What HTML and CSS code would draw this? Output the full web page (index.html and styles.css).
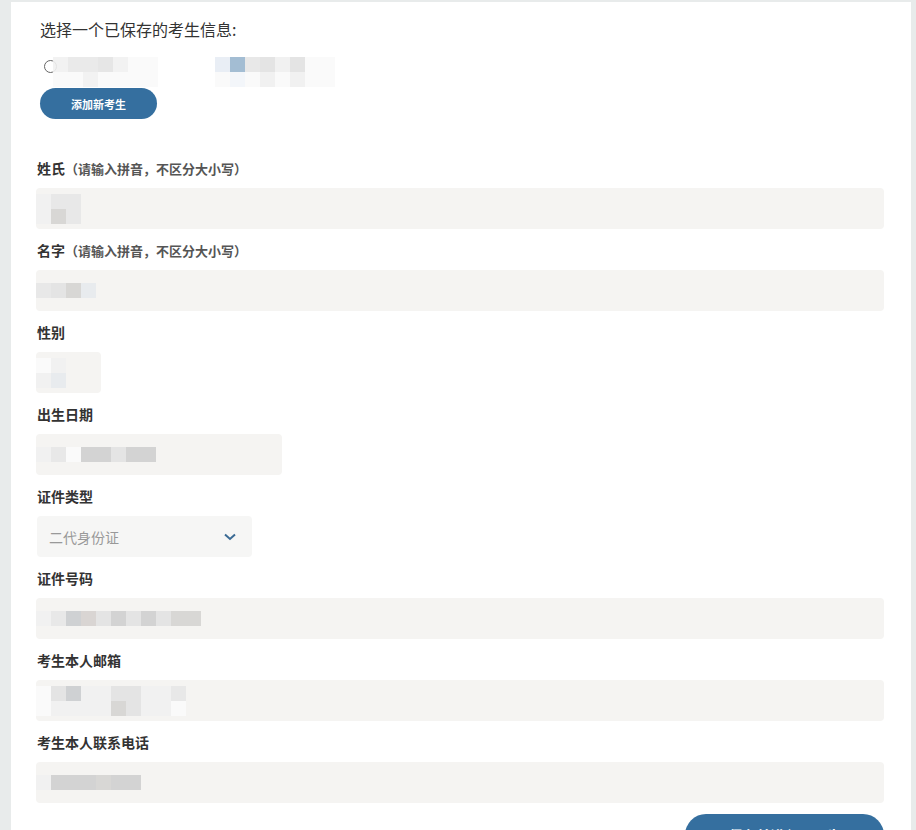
FILE: index.html
```html
<!DOCTYPE html>
<html lang="zh">
<head>
<meta charset="utf-8">
<title>考生信息</title>
<link rel="stylesheet" href="styles.css">
</head>
<body>
<div class="panel">
  <div class="saved">
    <div class="saved-title">选择一个已保存的考生信息:</div>
    <div class="saved-row">
      <span class="radio"></span>
      <span class="blur blur-a">
        <i class="c1"></i><i class="c2"></i><i class="c2"></i><i class="c3"></i><i class="c1"></i><i class="c0"></i><i class="c0"></i>
        <i class="c0"></i><i class="c0"></i><i class="c1"></i><i class="c0"></i><i class="c0"></i><i class="c0"></i><i class="c0"></i>
      </span>
      <span class="blur blur-b">
        <i class="cb1"></i><i class="cb2"></i><i class="c2"></i><i class="c3"></i><i class="c1"></i><i class="c3"></i><i class="c0"></i><i class="c0"></i>
        <i class="c0"></i><i class="cb0"></i><i class="c0"></i><i class="c1"></i><i class="c0"></i><i class="c1"></i><i class="c0"></i><i class="c0"></i>
      </span>
    </div>
    <button class="btn-add">添加新考生</button>
  </div>

  <div class="field">
    <div class="label">姓氏<span class="hint">（请输入拼音，不区分大小写）</span></div>
    <div class="input"><span class="blur cols3"><i class="c1"></i><i class="c2"></i><i class="c2"></i><i class="c1"></i><i class="c4"></i><i class="c2"></i></span></div>
  </div>
  <div class="field">
    <div class="label">名字<span class="hint">（请输入拼音，不区分大小写）</span></div>
    <div class="input"><span class="blur cols4"><i class="c2"></i><i class="c3"></i><i class="c4"></i><i class="cb3"></i></span></div>
  </div>
  <div class="field">
    <div class="label">性别</div>
    <div class="input small"><span class="blur cols2"><i class="c0"></i><i class="c1"></i><i class="c1"></i><i class="cb3"></i></span></div>
  </div>
  <div class="field">
    <div class="label">出生日期</div>
    <div class="input date"><span class="blur cols8"><i class="c1"></i><i class="c2"></i><i class="c0"></i><i class="c5"></i><i class="c5"></i><i class="c3"></i><i class="c5"></i><i class="c5"></i></span></div>
  </div>
  <div class="field">
    <div class="label">证件类型</div>
    <div class="input select">
      <span class="select-text">二代身份证</span>
      <svg class="chev" width="12" height="8" viewBox="0 0 12 8"><path d="M1 1.5 L6 6 L11 1.5" fill="none" stroke="#3a6a94" stroke-width="2"/></svg>
    </div>
  </div>
  <div class="field">
    <div class="label">证件号码</div>
    <div class="input"><span class="blur cols11"><i class="c1"></i><i class="c2"></i><i class="c6"></i><i class="c7"></i><i class="c3"></i><i class="c5"></i><i class="c3"></i><i class="c5"></i><i class="c3"></i><i class="c4"></i><i class="c4"></i></span></div>
  </div>
  <div class="field">
    <div class="label">考生本人邮箱</div>
    <div class="input"><span class="blur cols10"><i class="c0"></i><i class="c3"></i><i class="c6"></i><i class="c1"></i><i class="c1"></i><i class="c3"></i><i class="c3"></i><i class="c1"></i><i class="c1"></i><i class="c2"></i>
      <i class="c0"></i><i class="c1"></i><i class="c1"></i><i class="c1"></i><i class="c1"></i><i class="c4"></i><i class="c3"></i><i class="c1"></i><i class="c1"></i><i class="c0"></i></span></div>
  </div>
  <div class="field">
    <div class="label">考生本人联系电话</div>
    <div class="input"><span class="blur cols7"><i class="c1"></i><i class="c5"></i><i class="c5"></i><i class="c5"></i><i class="c4"></i><i class="c5"></i><i class="c5"></i></span></div>
  </div>

  <div class="actions">
    <button class="btn-submit">保存并进入下一步</button>
  </div>
</div>
</body>
</html>
```

FILE: styles.css
```css
html, body {
  margin: 0;
  padding: 0;
}
body {
  background: #e8ebeb;
  font-family: "Noto Sans CJK SC", "Noto Sans", sans-serif;
  color: #333;
  height: 830px;
  overflow: hidden;
}
.panel {
  background: #fff;
  margin: 2px 0 0 11px;
  width: 900px;
  min-height: 900px;
  box-sizing: border-box;
  padding: 15px 27px 0 25px;
}
.saved {
  padding-left: 4px;
}
.saved-title {
  font-size: 16px;
  line-height: 24px;
  color: #333;
}
.saved-row {
  display: flex;
  align-items: flex-start;
  height: 30px;
  margin-top: 16px;
}
.radio {
  width: 13px;
  height: 13px;
  border: 1px solid #666;
  border-radius: 50%;
  box-sizing: border-box;
  margin-top: 3px;
  margin-left: 4px;
  margin-right: -4px;
}
.blur {
  display: grid;
  grid-auto-rows: 15px;
}
.blur i {
  display: block;
}
.blur-a {
  grid-template-columns: repeat(7, 15px);
  opacity: 0.9;
}
.blur-b {
  grid-template-columns: repeat(8, 15px);
  margin-left: 57px;
}
.c0 { background: #fafafa; }
.c1 { background: #f1f1f1; }
.c2 { background: #e8e8e8; }
.c3 { background: #e4e4e4; }
.c4 { background: #d8d7d5; }
.c5 { background: #d3d3d3; }
.c6 { background: #cfd1d3; }
.c7 { background: #d9d5d3; }
.cb0 { background: #f3f6fa; }
.cb1 { background: #e9eef5; }
.cb2 { background: #a3bdd3; }
.cb3 { background: #e8ebee; }
.btn-add {
  display: block;
  width: 117px;
  height: 31px;
  border: none;
  border-radius: 16px;
  background: #356f9f;
  color: #fff;
  font-family: inherit;
  font-size: 11px;
  font-weight: bold;
  padding: 0;
  margin-top: 1px;
}
.field {
  margin-bottom: 13px;
}
.saved + .field {
  margin-top: 41px;
}
.label {
  font-size: 14px;
  font-weight: bold;
  line-height: 16px;
  height: 16px;
  color: #333;
  margin-bottom: 12px;
  margin-left: 1px;
}
.hint {
  font-size: 13px;
  color: #555;
}
.input {
  height: 41px;
  background: #f5f4f2;
  border-radius: 4px;
  display: flex;
  align-items: center;
}
.input.small { width: 65px; }
.input.date { width: 246px; }
.input.select {
  width: 215px;
  margin-left: 1px;
  background: #f6f6f5;
  padding: 0 16px 0 12px;
  box-sizing: border-box;
  justify-content: space-between;
}
.select-text {
  font-size: 14px;
  color: #999;
}
.chev { display: block; }
.cols2 { grid-template-columns: repeat(2, 15px); }
.cols3 { grid-template-columns: repeat(3, 15px); }
.cols4 { grid-template-columns: repeat(4, 15px); }
.cols7 { grid-template-columns: repeat(7, 15px); }
.cols8 { grid-template-columns: repeat(8, 15px); }
.cols10 { grid-template-columns: repeat(10, 15px); }
.cols11 { grid-template-columns: repeat(11, 15px); }
.actions {
  display: flex;
  justify-content: flex-end;
  margin-top: -2px;
}
.btn-submit {
  width: 199px;
  height: 42px;
  border: none;
  border-radius: 21px;
  background: #356f9f;
  color: #fff;
  font-family: inherit;
  font-size: 14px;
  font-weight: bold;
}
```
